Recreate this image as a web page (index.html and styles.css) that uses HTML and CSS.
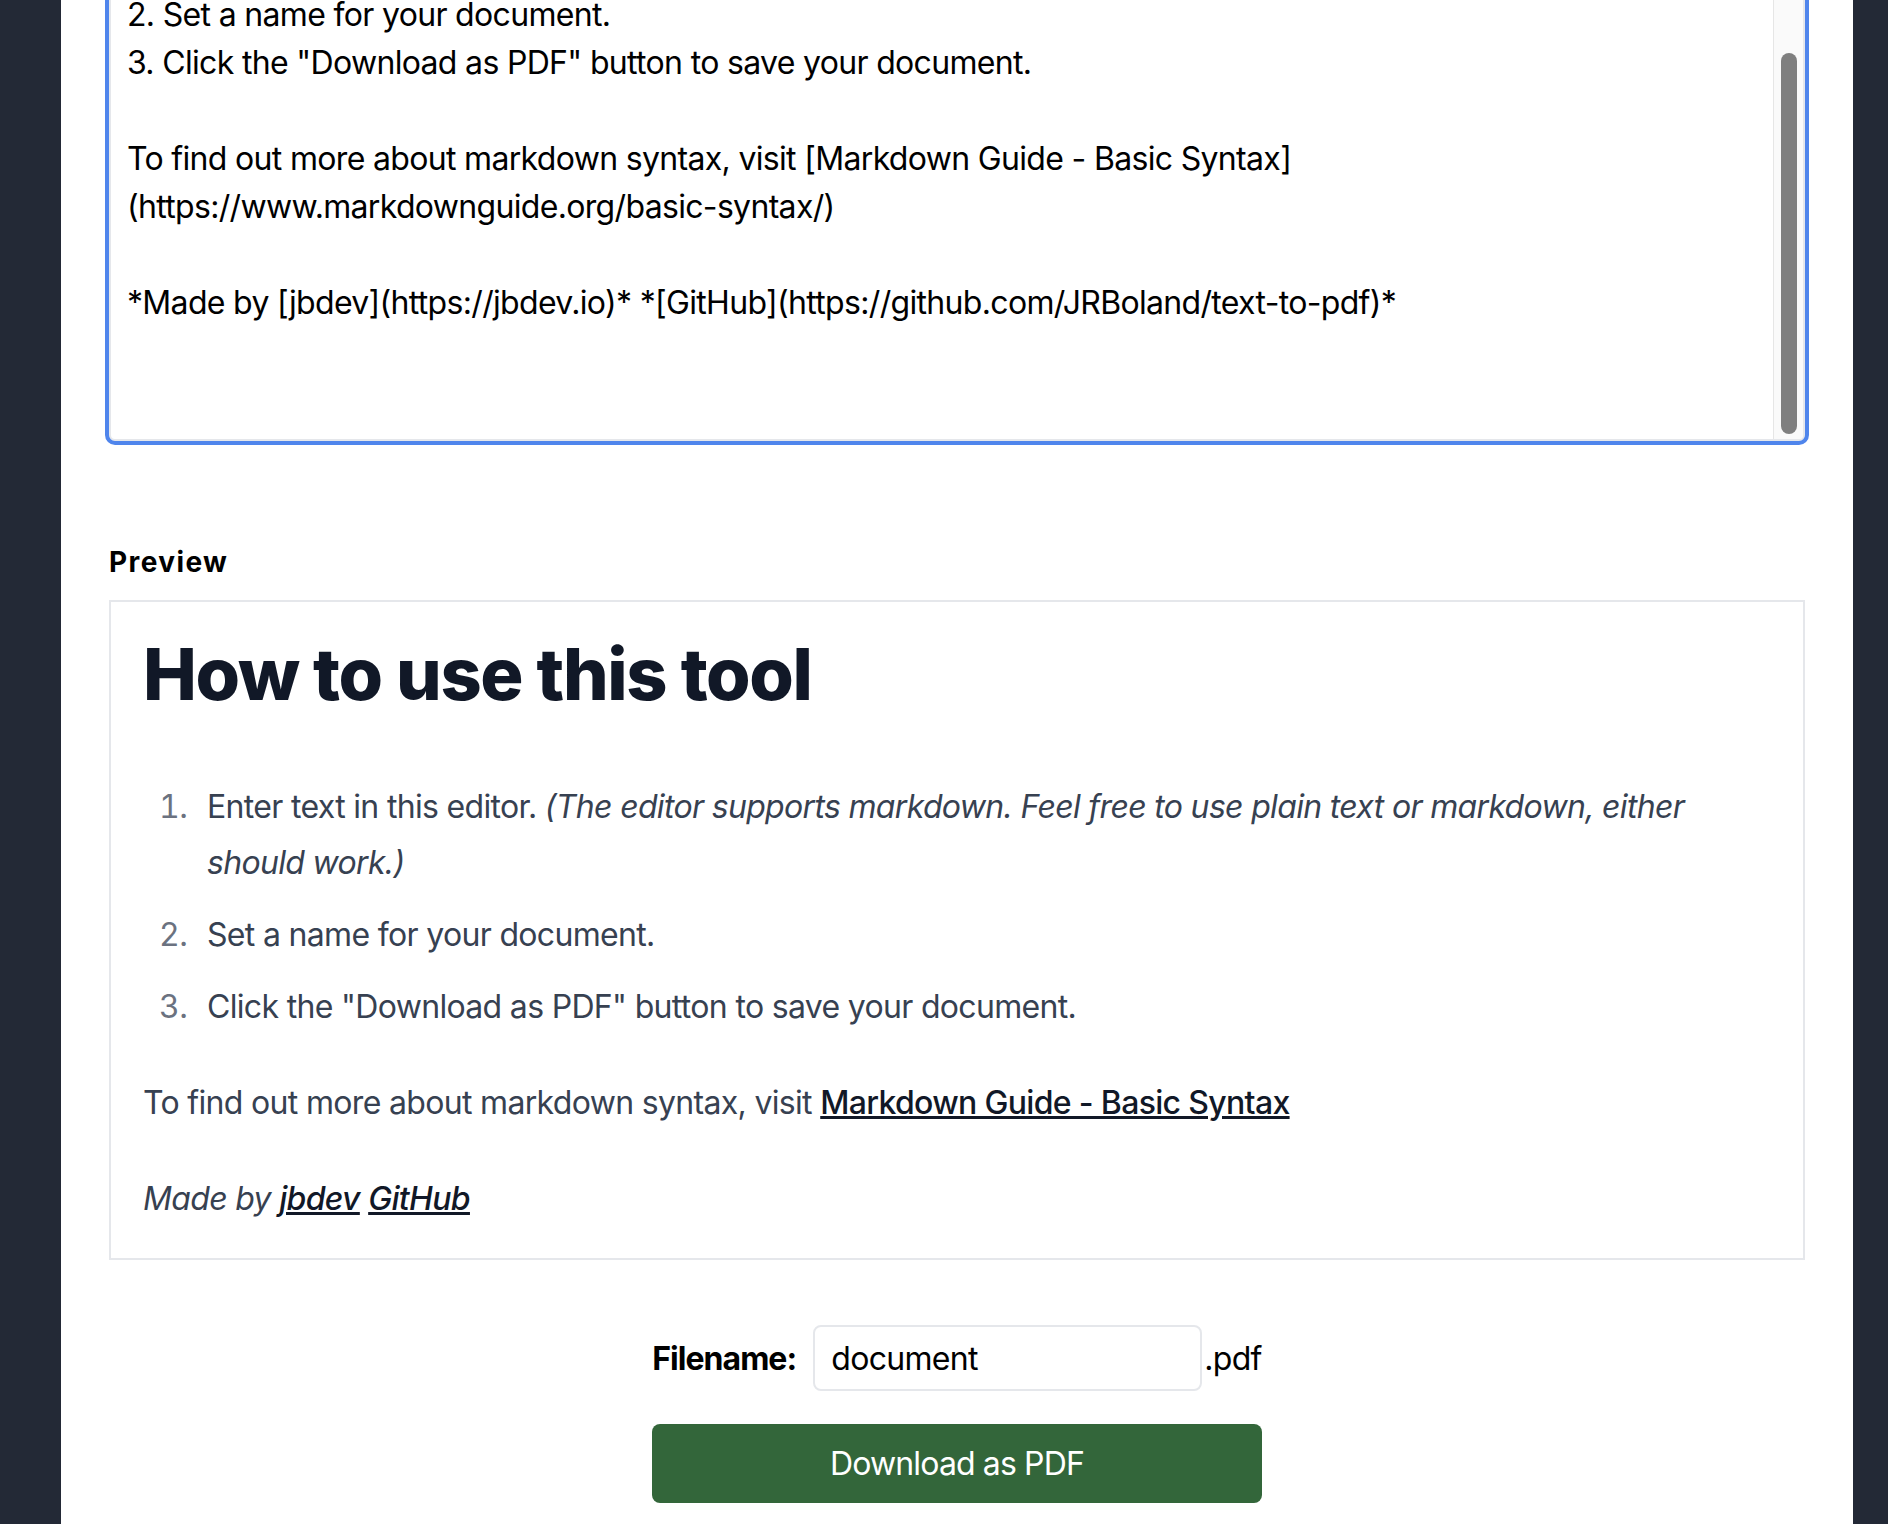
FILE: index.html
```html
<!DOCTYPE html>
<html lang="en">
<head>
<meta charset="utf-8">
<title>Text to PDF</title>
<link rel="stylesheet" href="styles.css">
</head>
<body>
<main class="page">
  <section class="editor-section">
    <div class="editor-wrap">
      <textarea class="editor" spellcheck="false"># How to use this tool

1. Enter text in this editor. *(The editor supports markdown. Feel free to use plain text or markdown, either should work.)*
2. Set a name for your document.
3. Click the "Download as PDF" button to save your document.

To find out more about markdown syntax, visit [Markdown Guide - Basic Syntax](https://www.markdownguide.org/basic-syntax/)

*Made by [jbdev](https://jbdev.io)* *[GitHub](https://github.com/JRBoland/text-to-pdf)*

</textarea>
      <div class="scrollbar" aria-hidden="true"><div class="scrollbar-thumb"></div></div>
    </div>
  </section>
  <section class="preview-section">
    <h2 class="section-label">Preview</h2>
    <div class="preview">
      <h1>How to use this tool</h1>
      <ol>
        <li>Enter text in this editor. <em>(The editor supports markdown. Feel free to use plain text or markdown, either should work.)</em></li>
        <li>Set a name for your document.</li>
        <li>Click the "Download as PDF" button to save your document.</li>
      </ol>
      <p>To find out more about markdown syntax, visit <a href="#">Markdown Guide - Basic Syntax</a></p>
      <p><em>Made by <a href="#">jbdev</a></em> <em><a href="#">GitHub</a></em></p>
    </div>
  </section>
  <section class="export">
    <div class="export-inner">
      <div class="filename-row">
        <label class="filename-label" for="filename">Filename:</label>
        <input id="filename" class="filename-input" type="text" value="document">
        <span class="ext">.pdf</span>
      </div>
      <button class="download" type="button">Download as PDF</button>
    </div>
  </section>
</main>
<script src="script.js"></script>
</body>
</html>
```

FILE: styles.css
```css
html, body {
  margin: 0;
  padding: 0;
}

body {
  background: #232936;
  font-family: Inter, "Liberation Sans", sans-serif;
  overflow: hidden;
}

.page {
  box-sizing: border-box;
  width: 1792px;
  min-height: 100vh;
  margin-left: 61px;
  padding: 0 48px 48px;
  background: #ffffff;
}

.editor-section {
  margin-top: -71px;
}

.editor-wrap {
  position: relative;
}

.editor {
  display: block;
  box-sizing: border-box;
  width: 100%;
  height: 512px;
  margin: 0;
  padding: 16px 46px 16px 16px;
  border: 2px solid #e5e7eb;
  border-radius: 6px;
  outline: 4px solid #4f85ec;
  resize: none;
  overflow: hidden;
  font-family: Inter, "Liberation Sans", sans-serif;
  font-size: 32px;
  line-height: 48px;
  letter-spacing: -0.021em;
  color: #000;
  background: #fff;
}

.scrollbar {
  position: absolute;
  top: 2px;
  right: 2px;
  bottom: 2px;
  width: 30px;
  box-sizing: border-box;
  background: #fafafa;
  border-left: 1px solid #e6e6e6;
  border-bottom-right-radius: 4px;
}

.scrollbar-thumb {
  position: absolute;
  left: 7px;
  right: 6px;
  bottom: 5px;
  height: 381px;
  border-radius: 8px;
  background: #7f7f7f;
}

.preview-section {
  padding-top: 101px;
}

.section-label {
  margin: 0 0 18px;
  font-size: 28px;
  line-height: 40px;
  font-weight: 700;
  letter-spacing: 0.05em;
  color: #000;
}

.preview {
  border: 2px solid #e5e7eb;
  padding: 32px 32px 31px;
  color: #374151;
  font-size: 32px;
  line-height: 56px;
  letter-spacing: -0.021em;
}

.preview h1 {
  margin: 0 0 65px;
  font-size: 72px;
  line-height: 80px;
  font-weight: 800;
  letter-spacing: -0.019em;
  color: #111827;
}

.preview ol {
  margin: 40px 0;
  padding-left: 52px;
}

.preview li {
  margin: 16px 0;
  padding-left: 12px;
}

.preview li::marker {
  color: #6b7280;
}

.preview p {
  margin: 40px 0;
}

.preview p:last-child {
  margin-bottom: 0;
}

.preview a {
  color: #111827;
  font-weight: 500;
  text-decoration: underline;
}

.export {
  margin-top: 65px;
  display: flex;
  justify-content: center;
}

.export-inner {
  display: flex;
  flex-direction: column;
  gap: 33px;
}

.filename-row {
  display: flex;
  align-items: center;
  font-size: 32px;
  letter-spacing: -0.021em;
  color: #000;
}

.filename-label {
  font-weight: 700;
  letter-spacing: -0.03em;
  margin-right: 17px;
}

.filename-input {
  box-sizing: border-box;
  width: 389px;
  height: 66px;
  margin: 0;
  padding: 0 16px;
  border: 2px solid #e5e7eb;
  border-radius: 8px;
  font-family: inherit;
  font-size: 32px;
  letter-spacing: -0.021em;
  color: #000;
  background: #fff;
  outline: none;
}

.ext {
  margin-left: 2px;
}

.download {
  height: 79px;
  border: none;
  border-radius: 8px;
  background: #33663a;
  color: #fff;
  font-family: inherit;
  font-size: 32px;
  letter-spacing: -0.027em;
  cursor: pointer;
}
```

FILE: script.js
```js
var editor = document.querySelector('.editor');
editor.scrollTop = editor.scrollHeight;
```
